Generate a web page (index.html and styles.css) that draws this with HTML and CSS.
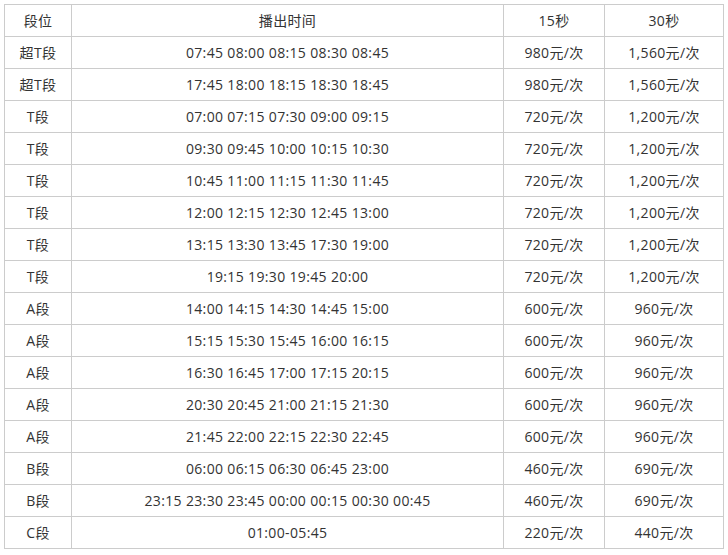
FILE: index.html
```html
<!DOCTYPE html>
<html lang="zh">
<head>
<meta charset="utf-8">
<link rel="stylesheet" href="styles.css">
</head>
<body>
<table class="rate">
<colgroup>
<col class="c1"><col class="c2"><col class="c3"><col class="c4">
</colgroup>
<tr><td>段位</td><td>播出时间</td><td>15秒</td><td>30秒</td></tr>
<tr><td>超T段</td><td>07:45 08:00 08:15 08:30 08:45</td><td>980元/次</td><td>1,560元/次</td></tr>
<tr><td>超T段</td><td>17:45 18:00 18:15 18:30 18:45</td><td>980元/次</td><td>1,560元/次</td></tr>
<tr><td>T段</td><td>07:00 07:15 07:30 09:00 09:15</td><td>720元/次</td><td>1,200元/次</td></tr>
<tr><td>T段</td><td>09:30 09:45 10:00 10:15 10:30</td><td>720元/次</td><td>1,200元/次</td></tr>
<tr><td>T段</td><td>10:45 11:00 11:15 11:30 11:45</td><td>720元/次</td><td>1,200元/次</td></tr>
<tr><td>T段</td><td>12:00 12:15 12:30 12:45 13:00</td><td>720元/次</td><td>1,200元/次</td></tr>
<tr><td>T段</td><td>13:15 13:30 13:45 17:30 19:00</td><td>720元/次</td><td>1,200元/次</td></tr>
<tr><td>T段</td><td>19:15 19:30 19:45 20:00</td><td>720元/次</td><td>1,200元/次</td></tr>
<tr><td>A段</td><td>14:00 14:15 14:30 14:45 15:00</td><td>600元/次</td><td>960元/次</td></tr>
<tr><td>A段</td><td>15:15 15:30 15:45 16:00 16:15</td><td>600元/次</td><td>960元/次</td></tr>
<tr><td>A段</td><td>16:30 16:45 17:00 17:15 20:15</td><td>600元/次</td><td>960元/次</td></tr>
<tr><td>A段</td><td>20:30 20:45 21:00 21:15 21:30</td><td>600元/次</td><td>960元/次</td></tr>
<tr><td>A段</td><td>21:45 22:00 22:15 22:30 22:45</td><td>600元/次</td><td>960元/次</td></tr>
<tr><td>B段</td><td>06:00 06:15 06:30 06:45 23:00</td><td>460元/次</td><td>690元/次</td></tr>
<tr><td>B段</td><td>23:15 23:30 23:45 00:00 00:15 00:30 00:45</td><td>460元/次</td><td>690元/次</td></tr>
<tr><td>C段</td><td>01:00-05:45</td><td>220元/次</td><td>440元/次</td></tr>
</table>
</body>
</html>
```
FILE: styles.css
```css
html, body {
  margin: 0;
  padding: 0;
  background: #fff;
}
body {
  padding: 4px;
  font-family: "Open Sans", "Noto Sans CJK SC", sans-serif;
  font-size: 14px;
  color: #333;
}
.rate {
  border-collapse: separate;
  border-spacing: 0;
  table-layout: fixed;
  width: 720px;
  border-left: 1px solid #ccc;
  border-top: 1px solid #ccc;
}
.c1 { width: 67px; }
.c2 { width: 432px; }
.c3 { width: 101px; }
.c4 { width: 119px; }
.rate tr { height: 32px; }
.rate td {
  padding: 0;
  text-align: center;
  vertical-align: middle;
  border-right: 1px solid #ccc;
  border-bottom: 1px solid #ccc;
  line-height: 20px;
  letter-spacing: 0.35px;
  white-space: nowrap;
}
```
